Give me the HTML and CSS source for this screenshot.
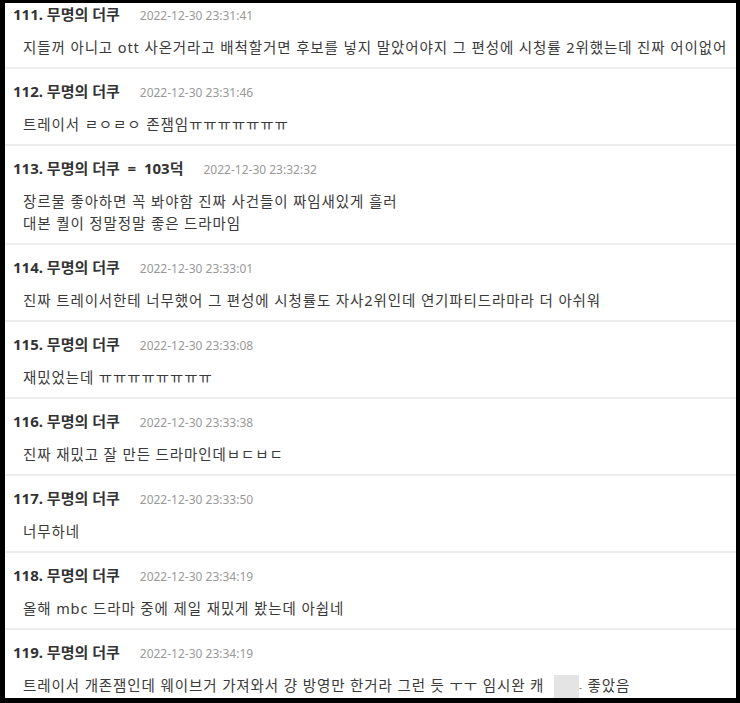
FILE: index.html
```html
<!DOCTYPE html>
<html lang="ko">
<head>
    <meta charset="UTF-8">
    <meta name="viewport" content="width=device-width, initial-scale=1.0">
    <title>댓글</title>
    <link rel="stylesheet" href="styles.css">
</head>
<body>
    <div class="frame">
        <ul class="comments">
            <li class="comment">
                <div class="meta"><span class="name">111. 무명의 더쿠</span><span class="time">2022-12-30 23:31:41</span></div>
                <p class="text">지들꺼 아니고 ott 사온거라고 배척할거면 후보를 넣지 말았어야지 그 편성에 시청률 2위했는데 진짜 어이없어</p>
            </li>
            <li class="comment">
                <div class="meta"><span class="name">112. 무명의 더쿠</span><span class="time">2022-12-30 23:31:46</span></div>
                <p class="text">트레이서 ㄹㅇㄹㅇ 존잼임ㅠㅠㅠㅠㅠㅠㅠ</p>
            </li>
            <li class="comment">
                <div class="meta"><span class="name">113. 무명의 더쿠 &nbsp;=&nbsp; 103덕</span><span class="time">2022-12-30 23:32:32</span></div>
                <p class="text">장르물 좋아하면 꼭 봐야함 진짜 사건들이 짜임새있게 흘러<br>대본 퀄이 정말정말 좋은 드라마임</p>
            </li>
            <li class="comment">
                <div class="meta"><span class="name">114. 무명의 더쿠</span><span class="time">2022-12-30 23:33:01</span></div>
                <p class="text">진짜 트레이서한테 너무했어 그 편성에 시청률도 자사2위인데 연기파티드라마라 더 아쉬워</p>
            </li>
            <li class="comment">
                <div class="meta"><span class="name">115. 무명의 더쿠</span><span class="time">2022-12-30 23:33:08</span></div>
                <p class="text">재밌었는데 ㅠㅠㅠㅠㅠㅠㅠㅠ</p>
            </li>
            <li class="comment">
                <div class="meta"><span class="name">116. 무명의 더쿠</span><span class="time">2022-12-30 23:33:38</span></div>
                <p class="text">진짜 재밌고 잘 만든 드라마인데ㅂㄷㅂㄷ</p>
            </li>
            <li class="comment">
                <div class="meta"><span class="name">117. 무명의 더쿠</span><span class="time">2022-12-30 23:33:50</span></div>
                <p class="text">너무하네</p>
            </li>
            <li class="comment">
                <div class="meta"><span class="name">118. 무명의 더쿠</span><span class="time">2022-12-30 23:34:19</span></div>
                <p class="text">올해 mbc 드라마 중에 제일 재밌게 봤는데 아쉽네</p>
            </li>
            <li class="comment">
                <div class="meta"><span class="name">119. 무명의 더쿠</span><span class="time">2022-12-30 23:34:19</span></div>
                <p class="text">트레이서 개존잼인데 웨이브거 가져와서 걍 방영만 한거라 그런 듯 ㅜㅜ 임시완 캐 <span class="redact"></span><span class="tick">-</span> 좋았음</p>
            </li>
        </ul>
    </div>
</body>
</html>
```

FILE: styles.css
```css
html, body {
    margin: 0;
    height: 703px;
    overflow: hidden;
    background: #000;
}
body {
    padding: 3px 4px 0 5px;
    box-sizing: border-box;
    font-family: "Noto Sans", "Noto Sans CJK KR", sans-serif;
    color: #333;
}
.frame {
    height: 695px;
    overflow: hidden;
    background: #fff;
}
.comments {
    list-style: none;
    margin: 0;
    padding: 0;
}
.comment {
    padding: 12px 0 9px 8px;
    border-top: 2px solid #ededed;
}
.comment:first-child {
    padding-top: 1px;
    border-top: none;
}
.meta {
    display: flex;
    align-items: baseline;
    gap: 20px;
    height: 20px;
    line-height: 20px;
}
.name {
    font-size: 15px;
    font-weight: bold;
    color: #333;
}
.time {
    font-size: 12px;
    color: #999;
}
.text {
    margin: 12px 0 0;
    padding-left: 10px;
    font-size: 14.5px;
    letter-spacing: 0.9px;
    line-height: 22px;
    color: #3a3a3a;
    white-space: nowrap;
}
.redact {
    display: inline-block;
    width: 25px;
    height: 25px;
    margin-left: 5px;
    vertical-align: middle;
    background: #e4e4e4;
}
.tick {
    font-size: 9px;
    color: #666;
}
```
